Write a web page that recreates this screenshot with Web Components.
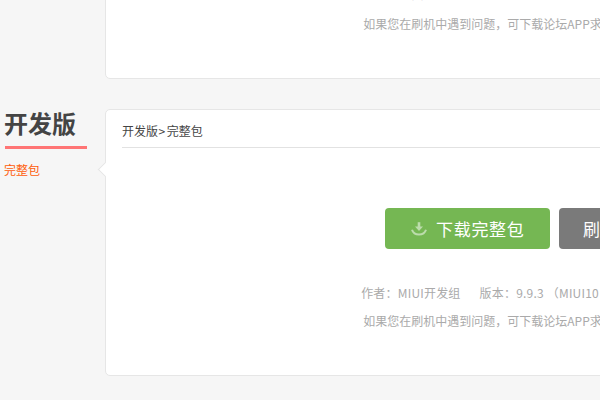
<!DOCTYPE html>
<html lang="zh">
<head>
<meta charset="utf-8">
<title>MIUI</title>
<style>
    html, body {
        margin: 0;
        height: 400px;
        overflow: hidden;
        background: #f6f6f6;
        font-family: "Noto Sans CJK SC", "Noto Sans", sans-serif;
    }
    /* page is shown scrolled down, first panel starts above the window */
    .page {
        margin-top: -188px;
        display: flex;
        flex-direction: column;
        gap: 30px;
    }
</style>
</head>
<body>
<div class="page">
    <rom-panel heading="稳定版" crumb="稳定版" sub="完整包" style="--meta-gap:28px;--help-gap:3px">
        <span slot="meta">作者：MIUI官方团队　　版本：V10.0.2.0.OEACNFH （MIUI10 8.1）　　大小：1.6G</span>
    </rom-panel>
    <rom-panel heading="开发版" crumb="开发版" sub="完整包" version="9.9.3"></rom-panel>
</div>

<template id="rom-button">
    <style>
        :host {
            display: flex;
            align-items: center;
            gap: 8px;
            width: 165px;
            height: 41px;
            box-sizing: border-box;
            padding-left: var(--pad, 25px);
            border-radius: 4px;
            background: var(--bg, #75b753);
            color: #fff;
            font-size: 17px;
            letter-spacing: 0.7px;
            white-space: nowrap;
        }
        ::slotted(svg) {
            width: 18px;
            height: 18px;
        }
    </style>
    <slot name="icon"></slot>
    <slot></slot>
</template>

<template id="rom-panel">
    <style>
        :host {
            display: flex;
            width: 1004px;
            color: #333;
        }
        .side {
            width: 105px;
            flex: none;
            padding: 0 0 0 5px;
            box-sizing: border-box;
        }
        .side h2 {
            margin: 0;
            width: 82px;
            height: 37px;
            border-bottom: 3px solid #ff7575;
            font-size: 24px;
            line-height: 27px;
            text-indent: -1px;
            color: #444;
            font-weight: 700;
            white-space: nowrap;
        }
        .side .sub {
            margin: 12px 0 0 -1px;
            font-size: 12px;
            line-height: 18px;
            color: #ff5c0a;
        }
        .card {
            position: relative;
            width: 899px;
            height: 267px;
            flex: none;
            box-sizing: border-box;
            padding: 0 16px;
            background: #fff;
            border: 1px solid #e6e6e6;
            border-radius: 5px;
        }
        .card::before {
            content: "";
            position: absolute;
            left: -6px;
            top: 54px;
            width: 10px;
            height: 10px;
            background: #fff;
            border-left: 1px solid #e6e6e6;
            border-bottom: 1px solid #e6e6e6;
            transform: rotate(45deg);
        }
        .crumb {
            height: 38px;
            padding-top: 11px;
            box-sizing: border-box;
            border-bottom: 1px solid #e2e2e2;
            font-size: 12px;
            line-height: 20px;
            color: #444;
        }
        .crumb i {
            font-style: normal;
            margin: 0 1.5px 0 0.5px;
        }
        .buttons {
            display: flex;
            justify-content: center;
            gap: 9px;
            margin-top: 60px;
        }
        .meta, .help {
            text-align: center;
            font-size: 12px;
            line-height: 27px;
            color: #aaa;
            white-space: nowrap;
        }
        .meta {
            margin-top: var(--meta-gap, 30px);
            padding-right: 8px;
            letter-spacing: 0.2px;
        }
        .help {
            margin-top: var(--help-gap, 1px);
        }
        .meta span + span {
            margin-left: 19px;
        }
    </style>
    <div class="side">
        <h2 id="heading"></h2>
        <div class="sub" id="sub"></div>
    </div>
    <div class="card">
        <div class="crumb"><span id="crumb"></span><i>&gt;</i><span id="crumb2"></span></div>
        <div class="buttons">
            <rom-button>
                <svg slot="icon" viewBox="0 0 18 18" fill="none">
                    <path d="M9 2.2V8" stroke="#bcdcac" stroke-width="2.6"/>
                    <path d="M5 6.6H13L9 11Z" fill="#bcdcac"/>
                    <path d="M2 9.8C3 13 5.6 14.6 9 14.6S15 13 16 9.8" stroke="#bcdcac" stroke-width="2"/>
                </svg>
                下载完整包
            </rom-button>
            <rom-button style="--bg:#7a7a7a;--pad:24px">刷机教程</rom-button>
        </div>
        <div class="meta"><slot name="meta"><span>作者：MIUI开发组</span><span>版本：<b id="version" style="font-weight:400"></b> （MIUI10 8.0）</span><span>大小：1.7G 更新</span></slot></div>
        <div class="help">如果您在刷机中遇到问题，可下载论坛APP求助，或者前往小米论坛发帖</div>
    </div>
</template>

<script>
    class RomButton extends HTMLElement {
        constructor() {
            super();
            let root = this.attachShadow({ mode: "open" });
            root.appendChild(document.getElementById("rom-button").content.cloneNode(true));
        }
    }
    class RomPanel extends HTMLElement {
        constructor() {
            super();
            let root = this.attachShadow({ mode: "open" });
            root.appendChild(document.getElementById("rom-panel").content.cloneNode(true));
        }
        connectedCallback() {
            let root = this.shadowRoot;
            root.getElementById("heading").textContent = this.getAttribute("heading");
            root.getElementById("sub").textContent = this.getAttribute("sub");
            root.getElementById("crumb").textContent = this.getAttribute("crumb");
            root.getElementById("crumb2").textContent = this.getAttribute("sub");
            root.getElementById("version").textContent = this.getAttribute("version") || "9.9.3";
        }
    }
    customElements.define("rom-button", RomButton);
    customElements.define("rom-panel", RomPanel);
</script>
</body>
</html>
